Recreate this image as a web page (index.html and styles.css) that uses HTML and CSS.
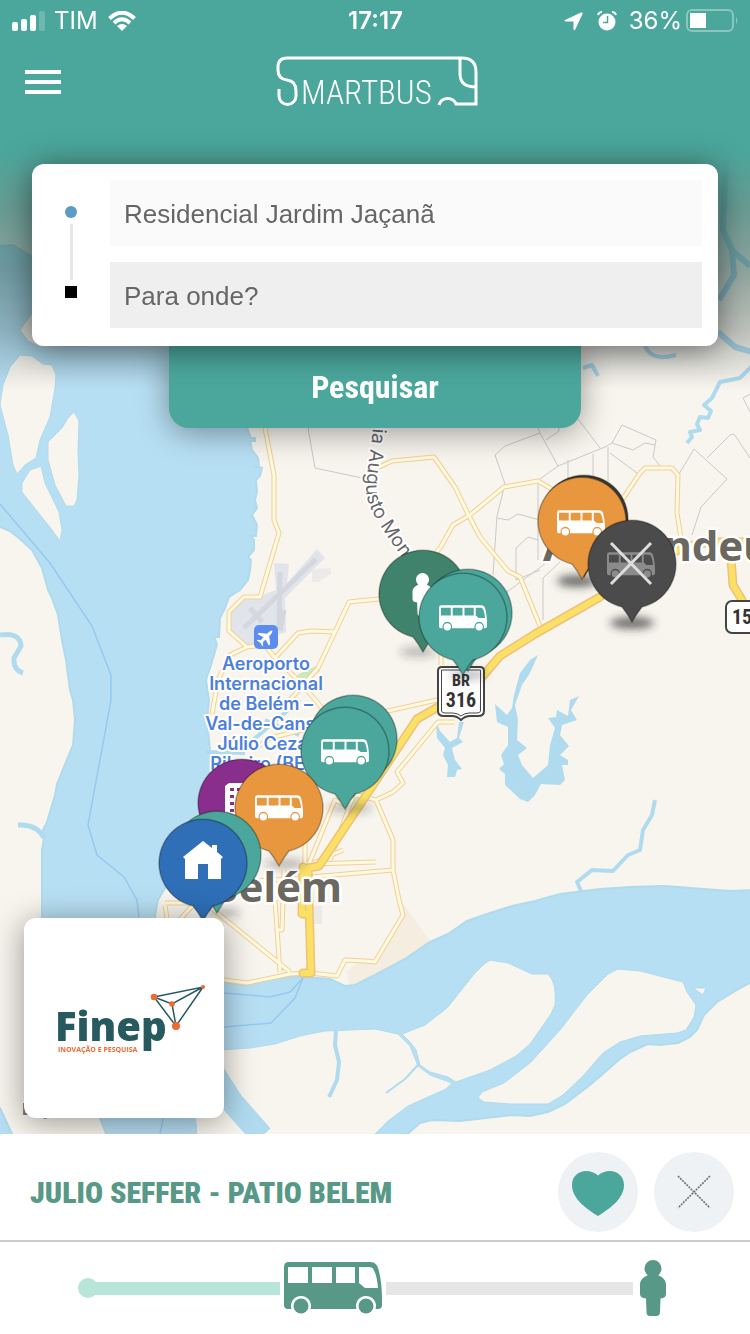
FILE: index.html
```html
<!DOCTYPE html>
<html lang="pt-BR">
<head>
<meta charset="utf-8">
<meta name="viewport" content="width=device-width, initial-scale=1">
<title>SmartBus</title>
<link rel="stylesheet" href="styles.css">
</head>
<body>
<svg class="defs" aria-hidden="true">
  <defs>
    <symbol id="bus" viewBox="0 0 98 52">
      <path fill="currentColor" fill-rule="evenodd" d="M5 0H86C91 0 93 3 94 6C97 15 98 27 98 37V43Q98 47 94 47H91.500A10 10 0 1 0 72.500 47H26.500A10 10 0 1 0 7.500 47H4Q0 47 0 43V5Q0 0 5 0ZM4 5V21H24V5ZM28 5V21H48V5ZM52 5V21H71V5ZM75 5V21L81 26H94Q93 13 89 6.500Q88 5 85 5Z"/>
      <circle fill="currentColor" cx="17" cy="44" r="7.500"/><circle fill="currentColor" cx="82" cy="44" r="7.500"/>
    </symbol>
    <symbol id="person" viewBox="0 0 26 56">
      <circle fill="currentColor" cx="13" cy="8.500" r="8.500"/>
      <path fill="currentColor" d="M8.500 15H17.500C23 17 26 20 26 25V34Q26 38 20.500 38.500L20 52Q20 56 16 56H10Q6.500 56 6.500 52L6 38.500Q0 38 0 34V25C0 20 3 17 8.500 15Z"/>
    </symbol>
    <symbol id="pin" viewBox="-50 -50 100 120" overflow="visible">
      <path fill="currentColor" stroke="#000" stroke-opacity=".3" stroke-width="1.500" d="M-10 43A44 44 0 1 1 10 43Q5 49 0 58Q-5 49 -10 43Z"/>
    </symbol>
    <filter id="soft" x="-50%" y="-100%" width="200%" height="300%"><feGaussianBlur stdDeviation="4"/></filter>
  </defs>
</svg>
<div class="app">
  <main class="stage">
    <svg class="map" viewBox="0 0 750 1134" preserveAspectRatio="xMidYMid slice" role="img" aria-label="Mapa de Belém">
      <rect class="land" width="750" height="1134"/>
      <path class="park" d="M403 903L430 941L405 959L375 975L350 986L347 972L360 960L375 962L403 915Z"/>
      <path class="water" d="M-5 246L13 245L32 257L200 300L235 400L247 428L251 438H255V441H250L252 450L258 458L259 466H254L262 468L260 476L256 480L257 492L255 500L257 508L252 515L257 525L256 536H251L254 540V550L248 557L251 560L250 570L248 580L240 590L229 597L225 608L220 618L219 637H214L217 644L214 655L210 668L206 680L209 700L207 720L210 750L212 800L165 888L158 900L155 915L160 950L190 980L224 983L247 985L275 979L290 977L305 977L330 979L345 986L355 985L375 975L405 959L430 942L448 934L467 921L487 914L512 906L535 901L560 894L600 889L630 887L665 886L730 891L755 890V980L737 990L717 1002L704 1015L697 1030L690 1037L678 1043L660 1045L648 1044L630 1052L620 1059L590 1085L565 1104L548 1112L530 1116L512 1115L460 1121L432 1120L420 1123L405 1136H107L100 1118L60 1000L42 920V850L44 838L42 832L47 822L55 795L57 784L73 745L75 720L73 700L70 690L66 660L62 640L58 615L52 598L48 590L42 568L32 550L20 539L10 531L-5 525Z"/>
      <g class="land shore">
        <path d="M20 355L32 356L43 364L52 365L56 375L55 388L50 417L40 440L36 458L25 465L17 474L13 465L8 435L0 405L3 385L10 367Z"/>
        <path d="M74 412L79 421L78 450L79 475L77 500L74 506H66L55 485L48 460V442L62 428L68 418Z"/>
        <path d="M41 466L45 483L59 512L62 530L60 541L52 530L22 492V483L30 470Z"/>
        <path d="M32 313L20 330L28 341L40 347L90 346V313Z"/>
        <path d="M402 1034L425 1025L447 1008L475 973L483 965L490 960L508 963L532 974L548 974Q557 982 555 1005L551 1014L530 1044L516 1056L490 1070L456 1082L448 1077L430 1072L420 1065L416 1050L410 1042Z"/>
        <path d="M478 1098L482 1092L504 1083L530 1063L560 1030L587 995L608 974L618 969L640 971L683 982L687 992L696 1005L694 1017L686 1030L677 1033L640 1036L620 1042L603 1053L583 1076L563 1095L548 1104L510 1104L484 1102Z"/>
        <path d="M693 988H706L703 995Z"/>
        <path d="M190 1052L250 1048L275 1044L300 1036L325 1031L375 1029L398 1034L410 1046L418 1066L430 1075L452 1083L446 1089L408 1106L388 1121L373 1136H197Z"/>
        <path d="M-5 1105L0 1108L13 1136H-5Z" class="water"/>
      </g>
      <g class="stream">
        <path stroke-width="23" d="M214 1074L232 1102L262 1136"/>
        <path stroke-width="5" d="M0 635Q20 632 21 646L14 658Q13 670 23 673M18 825Q37 824 44 838"/>
        <path stroke-width="4" d="M336 1031L335 1045L339 1062L337 1080L329 1097M581 891L577 882L592 870L613 871L628 855L640 850L643 830L652 815L655 800"/>
        <path stroke-width="2" d="M418 1065L405 1079L386 1093"/>
        <path stroke-width="6" d="M726 160L723 230L732 250L750 266M732 250L734 275L719 300M718 332L735 347L752 352"/>
        <path stroke-width="4" d="M752 366L740 378L720 382L712 398L704 405L711 411L708 418L700 417L697 424L700 430L690 432L692 437L687 443M645 346Q652 362 676 355M583 368L592 365L598 376M299 735L265 720M206 752L245 753M253 740L300 700"/>
      </g>
      <path class="lake" d="M538 655L530 660L520 673L514 695L512 708L507 715L495 704L497 722L508 727L508 745L501 755L504 764L499 769L505 774L505 785L520 799L528 802L535 795L541 784L560 785L565 780L562 765L568 765V760L560 755L569 746L560 735L562 725L577 720L571 710L579 696L570 700L568 716L557 710L556 717L548 718L555 728L550 745L548 765L533 778L522 765L518 755L527 748L517 740L518 720L515 705L522 685L530 673ZM436 722L437 738L445 748L443 755L448 765L447 777L455 777L457 770L462 769L455 760L452 748L463 742L459 738L464 722H459L457 738L450 742L440 731Z"/>
      <path class="ferry" d="M0 504L50 563L92 626L111 675V700L88 825L97 855L124 877L137 900L139 918M224 993L270 997L290 992L303 978M224 1027L271 1023L295 998L303 978M160 1134L165 1110"/>
      <g class="airport">
        <path d="M274 563L289 564L287 583L317 549L325 558L285 598L286 632L247 646L230 630V612L244 597L260 596L276 590Z"/>
        <path class="runway" d="M280 572L279 630M316 559L244 628M250 608L262 622M284 610L280 631"/>
        <path class="block" d="M312 569L331 568V574L318 582H312ZM312 906H322V924H312Z"/>
      </g>
      <path class="green" d="M297 675L318 665L320 671L303 682ZM350 805L360 792L368 800Z"/>
      <path class="limits" d="M308 428L315 468L362 478M538 428L540 433L505 446L495 455L505 484M540 433L558 466L605 447L612 443L622 425L656 440L653 457M612 443L633 450L645 443L655 445M558 466L540 479M575 415L600 448M546 440L559 431V428M505 484L497 516L493 575M568 460V480M593 454V480M608 447V482M610 453L637 473M653 457L661 467M497 518L508 520L518 514L540 520M538 482V560M538 540L528 537L516 548V580L540 570M507 590V595M543 620V578L560 562M679 474L694 449L727 479L701 507L692 535M707 458L730 435L734 434L750 458M743 398L750 412M743 398L750 394M507 592L550 560"/>
      <g class="road-case"><use href="#roads"/></g>
      <g class="road-fill"><path id="roads" d="M265 428L274 475V520L279 533L260 597H244L229 612V631L247 647L265 645L275 658L298 633L312 631L335 632L349 602L358 601L400 597L440 548L453 525L470 515L504 487L538 481L555 491M375 469L392 461L434 457L455 487L468 514L480 537L508 571L520 577L540 626M622 500L640 473L645 468H672L678 475L677 513L682 545M247 647L230 655L218 680L210 725M275 658L300 682L345 735M335 632L318 668L290 700M253 750L270 738L310 728L370 715L437 700M441 650V665M455 722H438L397 772L403 783L393 792L376 800L357 795M376 800L393 840V870L399 900L403 915L375 962L365 961L345 960L337 976L310 973L290 974L247 983L224 980M343 850L311 864L376 862M250 882L393 870M305 800V900M308 866L335 800L345 805M275 900L280 972M284 870L282 930L277 930M165 903H195L170 930M165 905L168 925M210 907L290 972M357 785L330 860M265 880L225 890"/></g>
      <path class="highway-case" d="M303 973H311L308 868L319 866L395 752L417 719L445 703L482 677L500 656L535 634L600 597L683 547L710 542H755M303 867L302 914H308M730 545L733 585L742 600"/>
      <path class="highway" d="M303 973H311L308 868L319 866L395 752L417 719L445 703L482 677L500 656L535 634L600 597L683 547L710 542H755M303 867L302 914H308M730 545L733 585L742 600"/>
      <path id="via" fill="none" d="M373 398C376 450 359 485 370 506Q378 528 438 604"/>
      <text class="street"><textPath href="#via" startOffset="17">Via Augusto Montenegro</textPath></text>
      <g class="airport-label" text-anchor="middle">
        <text x="266" y="670">Aeroporto</text><text x="266" y="690">Internacional</text><text x="266" y="710">de Belém –</text><text x="266" y="730">Val-de-Cans /</text><text x="266" y="750">Júlio Cezar</text><text x="266" y="770">Ribeiro (BEL)</text>
      </g>
      <rect x="254" y="625" width="24" height="24" rx="5" fill="#5b8def"/>
      <path fill="#fff" transform="translate(266 637) rotate(45)" d="M0-9Q1.500-8 1.500-3L8 2V4L1.500 2V6L4 8V9L0 8L-4 9V8L-1.500 6V2L-8 4V2L-1.500-3Q-1.500-8 0-9Z"/>
      <text class="city" x="342" y="902" text-anchor="end">Belém</text>
      <text class="city" x="543" y="561">Ananindeua</text>
      <text class="legal" x="22" y="1115">Legal</text>
      <g class="shield">
        <path d="M442 667H480Q484 667 484 671V711Q484 716 478 716H470Q465 716 461 720Q457 716 452 716H444Q438 716 438 711V671Q438 667 442 667Z"/>
        <path class="inner" d="M441.500 670H480.500V711Q480 713 477 713H469Q465 713 461 716Q457 713 453 713H445Q442 713 441.500 711Z"/>
        <rect x="726" y="601" width="40" height="32" rx="6"/>
        <text x="461" y="686" class="small">BR</text><text x="461" y="707">316</text><text x="742" y="624">15</text>
      </g>
      <g class="shadows" filter="url(#soft)">
        <ellipse cx="577" cy="581" rx="20" ry="6" opacity=".7"/><ellipse cx="632" cy="623" rx="22" ry="6" opacity=".7"/><ellipse cx="418" cy="652" rx="18" ry="5" opacity=".3"/><ellipse cx="468" cy="675" rx="18" ry="5" opacity=".3"/><ellipse cx="350" cy="808" rx="22" ry="5" opacity=".3"/><ellipse cx="285" cy="864" rx="20" ry="5" opacity=".3"/><ellipse cx="222" cy="913" rx="18" ry="5" opacity=".3"/>
      </g>
      <g class="pins">
        <use href="#pin" x="534" y="469" width="100" height="120" color="#3c3a37"/>
        <use href="#pin" x="532" y="471" width="100" height="120" color="#e8973e"/>
        <use href="#bus" class="glyph" x="557" y="510" width="48" height="26"/>
        <use href="#pin" x="582" y="514" width="100" height="120" color="#4b4b4b"/>
        <use href="#bus" x="607" y="552" width="48" height="26" color="#8b8b8b"/>
        <path stroke="#ddd" stroke-width="3" d="M611 543L651 584M651 543L611 584"/>
        <use href="#pin" x="373" y="544" width="100" height="120" color="#40836c"/>
        <use href="#person" class="glyph" x="412" y="573" width="21" height="43"/>
        <use href="#pin" x="418" y="563" width="100" height="120" color="#4ba69b"/>
        <use href="#pin" x="413" y="567" width="100" height="120" color="#4ba69b"/>
        <use href="#bus" class="glyph" x="439" y="605" width="48" height="26"/>
        <use href="#pin" x="303" y="689" width="100" height="120" color="#4ba69b"/>
        <use href="#pin" x="295" y="701" width="100" height="120" color="#4ba69b"/>
        <use href="#bus" class="glyph" x="321" y="739" width="48" height="26"/>
        <use href="#pin" x="192" y="753" width="100" height="120" color="#892e8c"/>
        <path fill="#fff" fill-rule="evenodd" d="M225 786L229 783H258V820H225ZM230 788V791H234V788ZM237 788V791H241V788ZM230 795V798H234V795ZM237 795V798H241V795ZM230 802V805H234V802ZM237 802V805H241V802ZM230 809V812H234V809Z"/>
        <use href="#pin" x="229" y="758" width="100" height="120" color="#e8973e"/>
        <use href="#bus" class="glyph" x="255" y="795" width="48" height="26"/>
        <use href="#pin" x="167" y="805" width="100" height="120" color="#4ba69b"/>
        <use href="#pin" x="153" y="813" width="100" height="120" color="#2e6fb7"/>
        <path fill="#fff" d="M203 841L212 848V845H217V852L223 857L221 859V879H208V864H198V879H185V859L183 857Z"/>
      </g>
    </svg>

    <div class="overlay">
      <div class="statusbar">
        <div class="status-left">
          <svg width="34" height="21" viewBox="0 0 34 21" fill="#fff"><rect y="11" width="6" height="9" rx="2"/><rect x="9" y="8" width="6" height="12" rx="2"/><rect x="18" y="4" width="6" height="16" rx="2"/><rect x="27" width="6" height="20" rx="2" opacity=".2"/></svg>
          <span>TIM</span>
          <svg class="wifi" width="28" height="20" viewBox="0 0 28 20"><path fill="none" stroke="#fff" stroke-width="4" d="M1.500 7.500Q14-4 26.500 7.500M6 12Q14 4.500 22 12"/><path fill="#fff" d="M9 15Q14 11 19 15L14 20Z"/></svg>
        </div>
        <time>17:17</time>
        <div class="status-right">
          <svg width="19" height="19" viewBox="0 0 19 19" fill="#fff"><path d="M17 .500Q19 0 18.500 2L11 18Q10 19 9.500 17V9.500H2Q-.500 9 1 8Z"/></svg>
          <svg width="20" height="20" viewBox="0 0 20 20"><circle cx="10" cy="11" r="8.500" fill="#fff"/><path d="M1 4Q2 1 5 1M15 1Q18 1 19 4" fill="none" stroke="#fff" stroke-width="2"/><path d="M10.500 5V11.500H6" fill="none" stroke="#4ba69b" stroke-width="1.500"/></svg>
          <span>36%</span>
          <svg class="battery" width="53" height="24" viewBox="0 0 53 24"><rect x="1" y="1" width="46" height="21" rx="5" fill="none" stroke="#8cc7bf" stroke-width="2"/><rect x="4" y="4" width="16" height="15" fill="#fff"/><path d="M50 8Q53 11.500 50 15Z" fill="#8cc7bf"/></svg>
        </div>
      </div>
      <header class="topbar">
        <button class="menu" type="button" aria-label="Menu"><i></i><i></i><i></i></button>
        <svg class="logo" width="202" height="52" viewBox="0 0 202 52" role="img" aria-label="SmartBus">
          <path d="M3 33V40A8.500 8.500 0 0 0 20 40V35Q20 25 11 24Q2 23 2 14V11Q2 2 11 2H186Q200 2 200 16V48H180A9 9 0 0 0 163 49M184 2V18Q184 31 200 31"/>
          <text x="25" y="48">MARTBUS</text>
        </svg>
      </header>
      <form class="search">
        <div class="card">
          <div class="route"><b class="from"></b><b class="link"></b><b class="to"></b></div>
          <div class="fields">
            <input class="origin" type="text" aria-label="Origem" value="Residencial Jardim Jaçanã">
            <input class="target" type="text" aria-label="Destino" placeholder="Para onde?">
          </div>
        </div>
        <button class="submit" type="button">Pesquisar</button>
      </form>
      <aside class="sponsor">
        <svg width="152" height="70" viewBox="0 0 152 70" role="img" aria-label="Finep Inovação e Pesquisa">
          <text class="brand" x="-1" y="57">Finep</text>
          <text class="tag" x="2" y="68">INOVAÇÃO E PESQUISA</text>
          <path d="M98 13L147 3L120 42ZM98 13L116 20L147 3M116 20L120 42"/>
          <g fill="#ee6a32"><circle cx="98" cy="13" r="3.200"/><circle cx="147" cy="3" r="2"/><circle cx="116" cy="20" r="2.800"/><circle cx="120" cy="42" r="4"/></g>
        </svg>
      </aside>
    </div>
  </main>

  <section class="line">
    <h1>JULIO SEFFER - PATIO BELEM</h1>
    <button class="round" type="button" aria-label="Favoritar"><svg width="52" height="50" viewBox="0 0 52 50"><path fill="#4ba69b" d="M26 49C13 41 0 31 0 18C0 9 7 4 14 4Q21 4 26 8.500Q31 4 38 4C45 4 52 9 52 18C52 31 39 41 26 49Z"/></svg></button>
    <button class="round" type="button" aria-label="Fechar"><svg width="34" height="34" viewBox="0 0 34 34"><path stroke="#777" stroke-width="1.700" stroke-dasharray="2 1" d="M1 1L33 33M33 1L1 33"/></svg></button>
  </section>
  <section class="progress" aria-label="Progresso da viagem">
    <i class="dot"></i><i class="done"></i>
    <svg class="bus" width="98" height="52"><use href="#bus"/></svg>
    <i class="left"></i>
    <svg class="person" width="26" height="56"><use href="#person"/></svg>
  </section>
</div>
</body>
</html>
```

FILE: styles.css
```css
* { box-sizing: border-box; }
body { margin: 0; background: #fff; font-family: "Liberation Sans", sans-serif; }
button, input { font: inherit; border: 0; margin: 0; }
button { padding: 0; cursor: pointer; }
svg { display: block; flex: none; }
.defs { position: absolute; width: 0; height: 0; }

.app { display: flex; flex-direction: column; min-height: 100vh; }
.stage { position: relative; flex: 1; display: flex; overflow: hidden; }
.map { position: absolute; inset: 0; width: 100%; height: 100%; }

.overlay {
  position: relative; flex: 1; display: flex; flex-direction: column;
  background: linear-gradient(#4ba69b 150px, rgba(56,125,116,.75) 210px, rgba(38,83,78,.5) 270px, rgba(19,42,39,.25) 330px, rgba(0,0,0,0) 390px);
}

.land { fill: #f8f5ee; }
.water { fill: #b7dff3; stroke: #b0dbec; stroke-width: 2; }
.shore { stroke: #b0dbec; stroke-width: 1; }
.park { fill: #f5eddf; }
.stream { fill: none; stroke: #b0dbef; stroke-linejoin: round; }
.lake { fill: #b0dbef; }
.ferry { fill: none; stroke: #97c9ef; stroke-width: 1.5; }
.airport { fill: #e1e4ea; }
.runway { fill: none; stroke: #d4d7de; stroke-width: 5; }
.block { fill: #ebeae8; }
.green { fill: #cde8bb; }
.limits { fill: none; stroke: #cbc9c5; stroke-width: 1; }
.road-case, .road-fill { fill: none; stroke-linejoin: round; }
.road-case { stroke: #f0cf9f; stroke-width: 5; }
.road-fill { stroke: #fffadb; stroke-width: 3; }
.highway-case, .highway { fill: none; stroke-linejoin: round; stroke-linecap: round; }
.highway-case { stroke: #efc07a; stroke-width: 9; }
.highway { stroke: #fae166; stroke-width: 6; }

.map text { paint-order: stroke; stroke: #fff; stroke-linejoin: round; }
.map .street { font: 400 19px Inter, sans-serif; fill: #666; stroke-width: 4; }
.airport-label { font: 600 18px Inter, sans-serif; fill: #4d80db; }
.airport-label text { stroke-width: 4; }
.map .city { font: 700 42px "Noto Sans", sans-serif; fill: #6b6761; stroke-width: 5; }
.map .legal { font: 700 16px Inter, sans-serif; fill: #777; }
.shield { fill: #fff; stroke: #444; stroke-width: 2; }
.shield .inner { stroke-width: 1; }
.map .shield text { font: 700 20px "Roboto Condensed", "Liberation Sans Narrow", sans-serif; fill: #333; stroke: none; text-anchor: middle; }
.map .shield .small { font-size: 16px; }
.shadows { fill: #333; }
.glyph { color: #fff; }

.statusbar { display: grid; grid-template-columns: 1fr auto 1fr; align-items: center; height: 40px; padding: 1px 11px 0 12px; color: #fff; font: 400 24px/40px Inter, sans-serif; }
.statusbar time { font-weight: 600; }
.status-left, .status-right { display: flex; align-items: center; gap: 8px; }
.status-left .wifi { margin-left: 2px; }
.status-right { justify-content: flex-end; }
.status-right span { margin-left: 4px; }
.status-right svg + svg { margin-left: 6px; }
.status-right .battery { margin-left: -4px; }

.topbar { display: grid; grid-template-columns: 1fr auto 1fr; align-items: center; height: 84px; padding: 0 21px 0 25px; }
.menu { display: flex; flex-direction: column; gap: 6px; width: 36px; background: none; }
.menu i { height: 4px; background: #fff; }
.logo { overflow: visible; }
.logo path { fill: none; stroke: #fff; stroke-width: 3; }
.logo text { font: 300 33px "Roboto Condensed", "Liberation Sans Narrow", sans-serif; fill: #fff; }

.search { display: flex; flex-direction: column; align-items: center; margin: 40px 32px 0; }
.card { position: relative; z-index: 1; display: flex; width: 100%; padding: 16px 16px 18px 0; border-radius: 12px; background: #fff; box-shadow: 0 4px 32px rgba(0,0,0,.5); }
.route { display: flex; flex-direction: column; align-items: center; justify-content: center; gap: 6px; width: 78px; padding-bottom: 4px; }
.from { width: 12px; height: 12px; border-radius: 50%; background: #5a9cc5; }
.link { width: 3px; height: 56px; background: #e6e7ea; }
.to { width: 12px; height: 12px; background: #000; }
.fields { flex: 1; display: flex; flex-direction: column; gap: 16px; }
.fields input { width: 100%; height: 66px; padding: 2px 14px 0; border-radius: 0; color: #666; font-size: 26px; outline: 0; }
.fields input::placeholder { color: #666; opacity: 1; }
.origin { background: #fafafa; }
.target { background: #efefef; }
.submit { width: 60%; height: 82px; border-radius: 0 0 20px 20px; background: #4ba69b; color: #fff; font: 700 32px "Roboto Condensed", "Liberation Sans Narrow", sans-serif; box-shadow: 0 4px 32px rgba(0,0,0,.4); }

.sponsor { display: flex; align-items: center; justify-content: center; width: 200px; height: 200px; margin: auto 0 16px 24px; padding: 2px 0 0 16px; border-radius: 12px; background: #fff; box-shadow: 0 4px 32px rgba(0,0,0,.4); }
.sponsor svg { overflow: visible; }
.sponsor path { fill: none; stroke: #265a5e; stroke-width: 1.5; }
.brand { font: 800 40px "Open Sans", sans-serif; fill: #265a5e; }
.tag { font: 700 7px "Open Sans", sans-serif; fill: #ee6a32; }

.line { display: flex; align-items: center; gap: 16px; padding: 18px 16px 8px 30px; border-bottom: 2px solid #ccc; }
.line h1 { flex: 1; margin: 0; color: #579986; font: 900 30px "Roboto Condensed", "Liberation Sans Narrow", sans-serif; }
.round { display: grid; place-items: center; width: 80px; height: 80px; border-radius: 50%; background: #eef2f4; }

.progress { display: flex; align-items: center; height: 92px; padding: 0 84px 0 78px; color: #579986; }
.dot { width: 20px; height: 20px; border-radius: 50%; background: #b7e6d8; }
.done { flex: 43; height: 13px; margin: 0 4px 0 -4px; background: #b7e6d8; }
.left { flex: 57; height: 13px; margin: 0 7px 0 4px; background: #e6e6e6; }
```
